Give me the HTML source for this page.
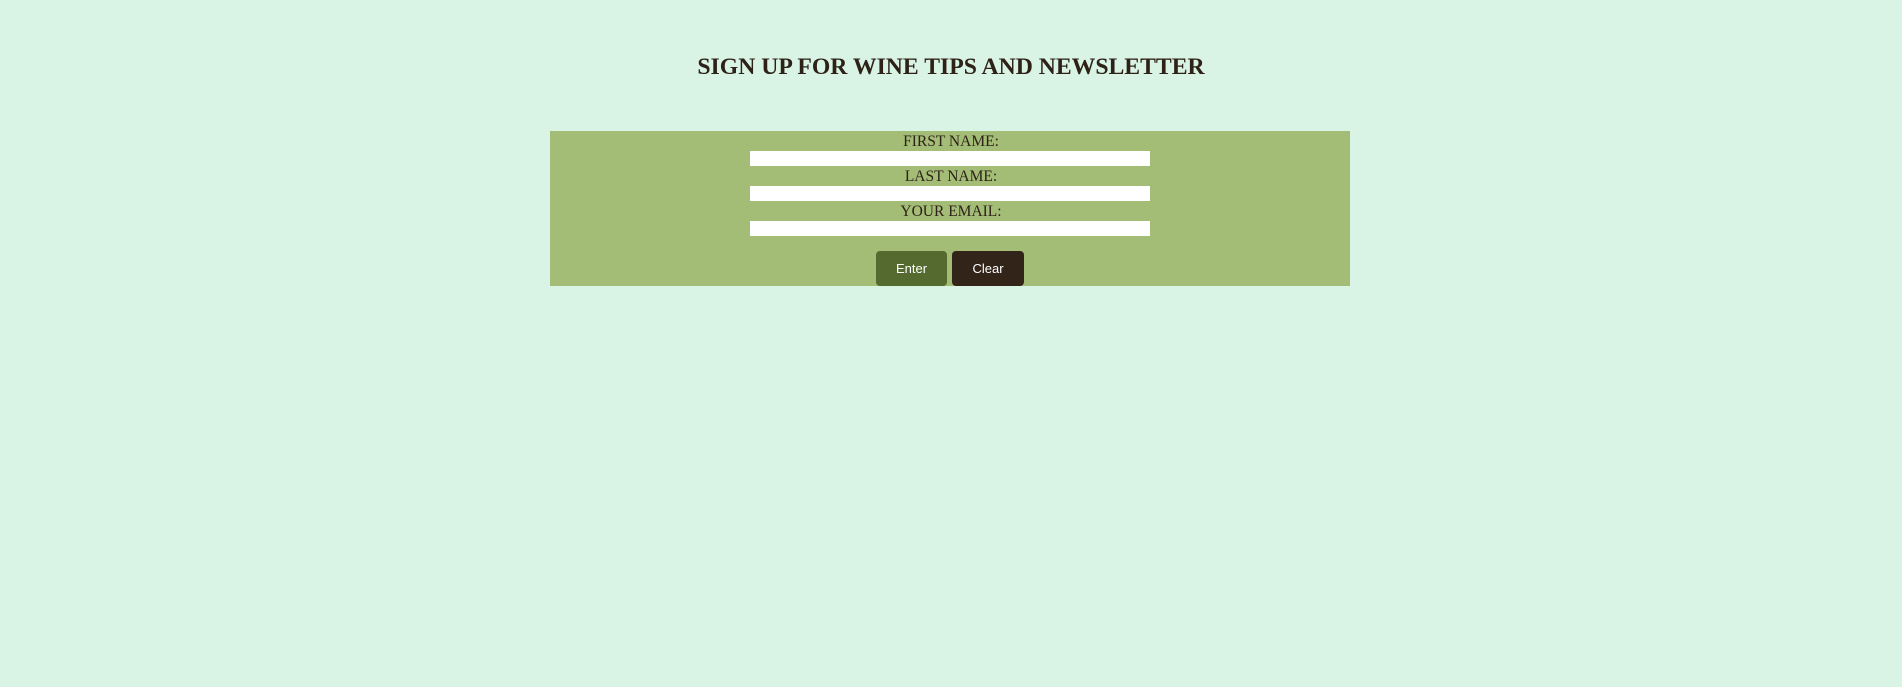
<!DOCTYPE html>
<html><head><meta charset="utf-8"><style>
html,body{margin:0;padding:0;width:1902px;height:687px;background:#d9f4e5;overflow:hidden;position:relative;font-family:"Liberation Serif",serif;color:#2e2218}
.t{position:absolute;left:0;width:1902px;text-align:center;top:52px;font-size:23.7px;font-weight:bold;line-height:30px}
.box{position:absolute;left:550px;top:131px;width:800px;height:155px;background:#a3bc76}
.l{position:absolute;left:0;width:1902px;text-align:center;font-size:15.5px;line-height:18px}
.i{position:absolute;left:750px;width:400px;height:15px;background:#fff}
.b{position:absolute;top:251px;height:35px;border-radius:4px;color:#fff;font-family:"Liberation Sans",sans-serif;font-size:13px;line-height:35px;text-align:center}
</style></head><body>
<div class="t">SIGN UP FOR WINE TIPS AND NEWSLETTER</div>
<div class="box"></div>
<div class="l" style="top:133px">FIRST NAME:</div>
<div class="i" style="top:151px"></div>
<div class="l" style="top:168px">LAST NAME:</div>
<div class="i" style="top:186px"></div>
<div class="l" style="top:203px">YOUR EMAIL:</div>
<div class="i" style="top:221px"></div>
<div class="b" style="left:876px;width:71px;background:#546a2e">Enter</div>
<div class="b" style="left:952px;width:72px;background:#33241a">Clear</div>
</body></html>
